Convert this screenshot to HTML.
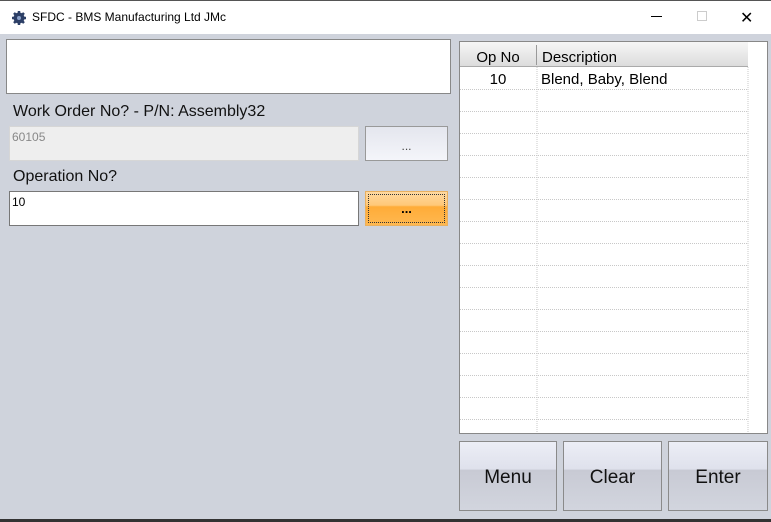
<!DOCTYPE html><html><head><style>
body{margin:0;width:771px;height:522px;background:#cfd3dc;font-family:"Liberation Sans",sans-serif;position:relative;overflow:hidden}
.a{position:absolute;box-sizing:border-box}
.bb{border:1px solid #8a8a8a;background:linear-gradient(#eceef6 0,#dfe1ec 40%,#c8cad4 41%,#d2d5de 100%);font-size:19px;display:flex;align-items:center;justify-content:center;color:#111;padding-top:3px}
</style></head><body>
<div class="a" style="left:0;top:0;width:771px;height:34px;background:#fff;border-top:1px solid #555"></div>
<svg class="a" style="left:11px;top:10px" width="16" height="16" viewBox="0 0 16 16"><circle cx="8" cy="8" r="5.5" fill="#2c3f66"/><g stroke="#2c3f66" stroke-width="2.5"><path d="M8 1v14M1 8h14M3 3l10 10M13 3L3 13"/></g><circle cx="8" cy="8" r="2" fill="#8aa0c8"/></svg>
<div class="a" style="left:32px;top:10px;font-size:12px;color:#000">SFDC - BMS Manufacturing Ltd JMc</div>
<div class="a" style="left:651px;top:16px;width:11px;height:1px;background:#000"></div>
<div class="a" style="left:697px;top:11px;width:10px;height:10px;border:1px solid #ccc"></div>
<div class="a" style="left:740px;top:8px;font-size:16px;color:#000">✕</div>
<div class="a" style="left:6px;top:39px;width:445px;height:55px;background:#fff;border:1px solid #888"></div>
<div class="a" style="left:13px;top:103px;font-size:16px;color:#111">Work Order No? - P/N: Assembly32</div>
<div class="a" style="left:9px;top:126px;width:350px;height:35px;background:#eeeeee;border:1px solid #d6d6d6;font-size:12px;color:#888;padding:3px 2px">60105</div>
<div class="a" style="left:365px;top:126px;width:83px;height:35px;border:1px solid #999;background:linear-gradient(#e4e6ee,#f4f5fa);font-size:12px;color:#444;text-align:center;padding-top:12px">...</div>
<div class="a" style="left:13px;top:168px;font-size:16px;color:#111">Operation No?</div>
<div class="a" style="left:9px;top:191px;width:350px;height:35px;background:#fff;border:1px solid #777;font-size:12px;color:#000;padding:3px 2px">10</div>
<div class="a" style="left:365px;top:191px;width:83px;height:35px;border:1px solid #e8b060;background:linear-gradient(#ffd9a0 0,#ffc878 40%,#ffac38 45%,#ffb850 100%);padding:2px"><div style="border:1px dotted #333;height:100%;box-sizing:border-box;text-align:center;font-size:13px;font-weight:bold;padding-top:6px">...</div></div>
<div class="a" style="left:459px;top:41px;width:309px;height:393px;background:#fff;border:1px solid #888"></div>
<div class="a" style="left:460px;top:42px;width:288px;height:25px;background:linear-gradient(#f6f6f6,#dcdcdc);border-bottom:1px solid #aaa"></div>
<div class="a" style="left:536px;top:45px;width:1px;height:20px;background:#999"></div>
<div class="a" style="left:460px;top:49px;width:76px;text-align:center;font-size:15px">Op No</div>
<div class="a" style="left:542px;top:49px;font-size:15px">Description</div>
<div class="a" style="left:460px;top:71px;width:76px;text-align:center;font-size:15px">10</div>
<div class="a" style="left:541px;top:71px;font-size:15px">Blend, Baby, Blend</div>
<svg class="a" style="left:460px;top:67px" width="289" height="366">
<g stroke="#c8c8c8" stroke-dasharray="1,1">
<path d="M77 0v366M288 0v366"/>
<path d="M0 22.5h288M0 44.5h288M0 66.5h288M0 88.5h288M0 110.5h288M0 132.5h288M0 154.5h288M0 176.5h288M0 198.5h288M0 220.5h288M0 242.5h288M0 264.5h288M0 286.5h288M0 308.5h288M0 330.5h288M0 352.5h288"/>
</g></svg>
<div class="a bb" style="left:459px;top:441px;width:98px;height:70px">Menu</div>
<div class="a bb" style="left:563px;top:441px;width:99px;height:70px">Clear</div>
<div class="a bb" style="left:668px;top:441px;width:100px;height:70px">Enter</div>
<div class="a" style="left:0;top:519px;width:771px;height:3px;background:#333"></div>
</body></html>
